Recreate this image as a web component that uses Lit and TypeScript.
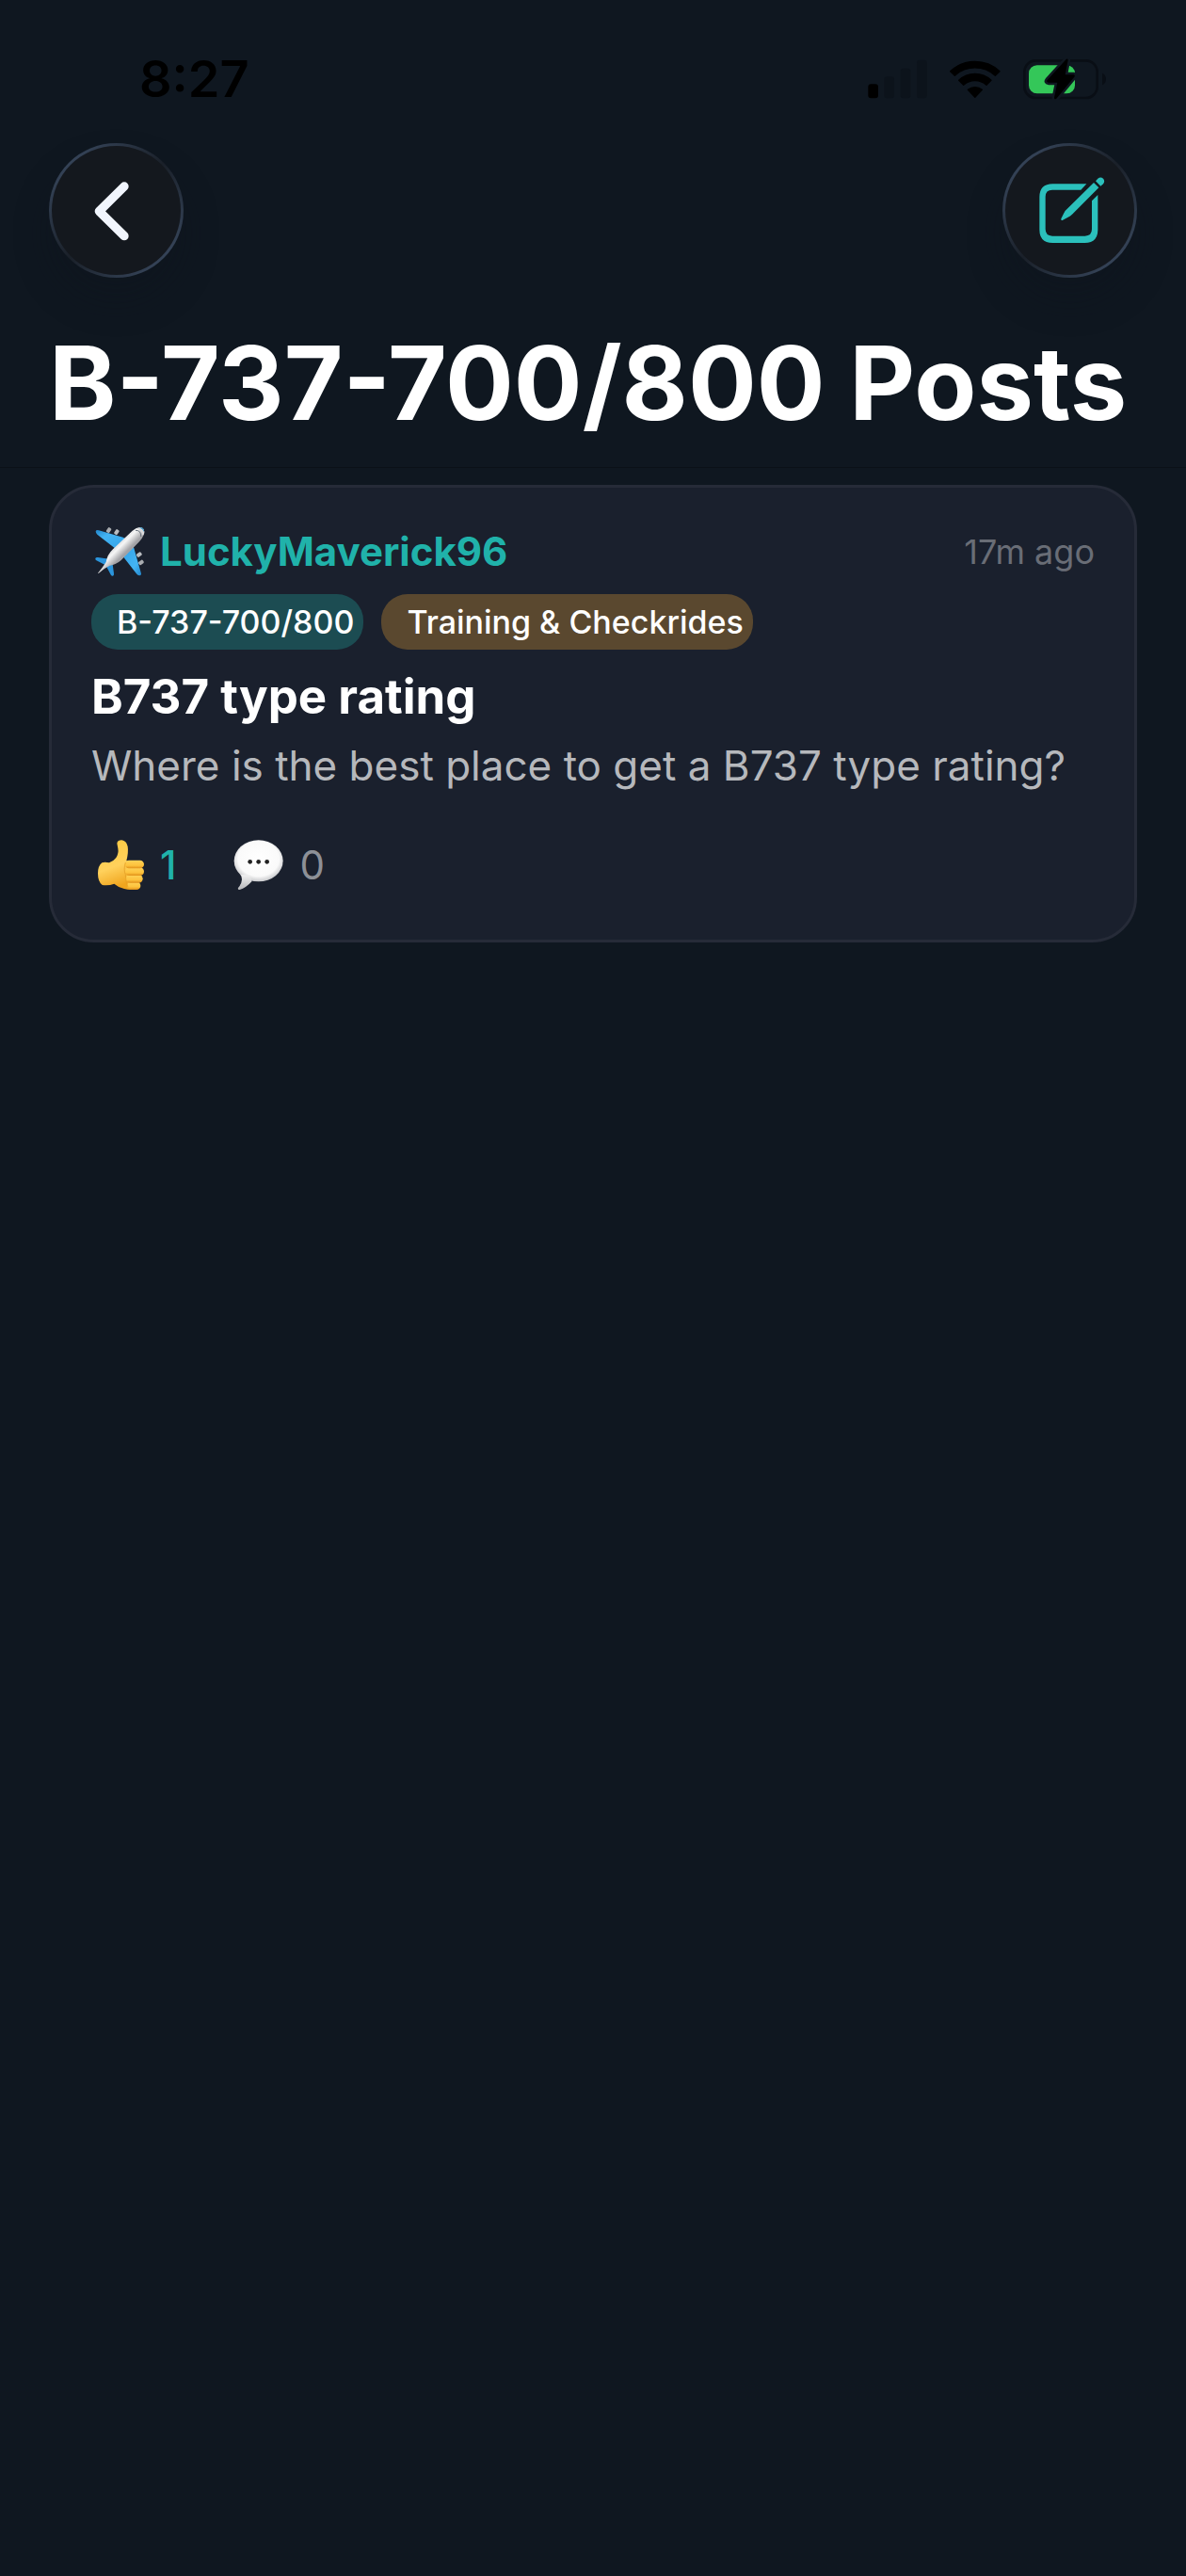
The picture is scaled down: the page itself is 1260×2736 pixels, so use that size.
import { LitElement, html, css, svg } from "lit";
import { customElement, property } from "lit/decorators.js";

interface Post {
  author: string;
  age: string;
  aircraft: string;
  topic: string;
  title: string;
  body: string;
  likes: number;
  comments: number;
}

const signalIcon = html`<svg class="signal" viewBox="185 95 189 132" role="img" aria-label="Signal">
  <rect x="186" y="177" width="32" height="45" rx="9" fill="#000" />
  <g fill="#0c131b">
    <rect x="237" y="153" width="32" height="69" rx="9" />
    <rect x="289" y="127" width="32" height="95" rx="9" />
    <rect x="341" y="100" width="32" height="122" rx="9" />
  </g>
</svg>`;

const wifiIcon = html`<svg class="wifi" viewBox="446 95 162 132" role="img" aria-label="Wi-Fi">
  <g fill="#000" stroke="#000" stroke-width="4" stroke-linejoin="round">
    <path d="M448 136 A115 115 0 0 1 605 136 L591 150 A95 95 0 0 0 462 150 Z" />
    <path d="M475 165 A75 75 0 0 1 578 165 L563 180 A54 54 0 0 0 490 180 Z" />
    <path d="M504 195 A35 35 0 0 1 549 195 L526.500 219 Z" />
  </g>
</svg>`;

const boltPath =
  "M818 98 Q823 94 824 100 L815 147 L842 147 Q848 149 844 154 L787 223 Q780 228 780 220 L790 172 L762 172 Q753 170 758 164 Z";

const batteryIcon = html`<svg class="battery" viewBox="681 95 264 132" role="img" aria-label="Battery charging">
  <rect x="685" y="102" width="232" height="119" rx="36" fill="none" stroke="#090e15" stroke-width="8" />
  <path d="M933 142 Q945 147 945 161 Q945 175 933 180 Z" fill="#090e15" />
  <rect x="699" y="117" width="147" height="90" rx="26" fill="#34c759" />
  <path d=${boltPath} fill="#0f1720" stroke="#0f1720" stroke-width="15" stroke-linejoin="round" />
  <path d=${boltPath} fill="#000" />
</svg>`;

const backIcon = svg`<path d="M394 504 L314 583 L394 662" fill="none" stroke="#f1f5fd"
  stroke-width="28" stroke-linecap="round" stroke-linejoin="round" />`;

const composeIcon = svg`<g fill="#2bc0bc">
  <path d="M885 496 H777 Q735 496 735 538 V642 Q735 684 777 684 H879 Q921 684 921 642 V531 L902 550 V640
    Q902 662 880 662 H776 Q754 662 754 640 V537 Q754 515 776 515 H867 Z" />
  <path d="M908 492 L924 508 L839 593 Q833 599 826 602 L808 612 Q802 613 804 607 L813 589 Q816 582 822 577 Z" />
  <path d="M914 487 L921 479 Q930 472 938 479 Q945 487 938 496 L930 503 Z" />
</g>`;

const planeHalf = svg`
  <rect x="-6" y="-8" width="12" height="17" rx="4" transform="translate(227 188) rotate(35)" fill="#a9acb0" />
  <rect x="-6" y="-8" width="12" height="17" rx="4" transform="translate(252 194) rotate(35)" fill="#b9bcc0" />
  <path d="M185 192 Q187 186 195 189 L272 211 Q282 214 288 222 L260 254 L246 246 L190 202 Q185 198 185 192 Z" fill="url(#wing)" />
  <path d="M184 278 Q186 274 192 275 L228 280 L236 292 L222 303 L186 284 Q183 281 184 278 Z" fill="#2b95dc" />`;

const planeEmoji = html`<svg class="emoji" viewBox="171 176 171 162" role="img" aria-label="Airplane">
  <defs>
    <linearGradient id="wing" x1="0" y1="0" x2="1" y2="1">
      <stop offset="0" stop-color="#2186cc" />
      <stop offset="0.3" stop-color="#44b4f3" />
      <stop offset="1" stop-color="#2e9fe6" />
    </linearGradient>
    <linearGradient id="hull" gradientUnits="userSpaceOnUse" x1="255" y1="225" x2="285" y2="255">
      <stop offset="0" stop-color="#d5d5d7" />
      <stop offset="0.4" stop-color="#f6f6f6" />
      <stop offset="1" stop-color="#a2a2a6" />
    </linearGradient>
  </defs>
  ${planeHalf}
  <g transform="matrix(0 -1 -1 0 518 518)">${planeHalf}</g>
  <path d="M192 325 Q208 306 218 290 Q222 266 240 249 L302 190 Q319 176 333 181 Q344 188 338 204 Q334 214 324 225 L266 284 Q250 298 230 301 Q214 308 194 326 Z" fill="url(#hull)" />
  <path d="M315 183 Q330 186 334 205 L338 202 Q343 188 334 181 Q327 178 315 183 Z" fill="#d9dadc" />
  <path d="M312 189 Q330 188 329 209" fill="none" stroke="#6d7680" stroke-width="3" />
  <path d="M324 180 Q340 178 339 194 L334 186 Z" fill="#2f93c8" />
</svg>`;

const thumbEmoji = html`<svg class="emoji" viewBox="171 335 171 162" role="img" aria-label="Likes">
  <defs>
    <linearGradient id="hand" x1="0" y1="0" x2="0.3" y2="1">
      <stop offset="0" stop-color="#fdc93f" />
      <stop offset="0.6" stop-color="#ffd15c" />
      <stop offset="1" stop-color="#f0a51e" />
    </linearGradient>
    <linearGradient id="finger" x1="0" y1="0" x2="0" y2="1">
      <stop offset="0" stop-color="#ffd257" />
      <stop offset="0.65" stop-color="#fdc23c" />
      <stop offset="1" stop-color="#e08f18" />
    </linearGradient>
  </defs>
  <path d="M205 408 Q214 405 228 408 Q240 405 250 392 Q259 378 256 362 L253 346 Q255 336 268 336 Q283 338 287 356 Q290 374 283 402
    L320 404 L318 490 Q300 497 276 491 Q256 486 244 475 Q226 482 206 479 Q192 468 192 442 Q192 418 205 408 Z" fill="url(#hand)" />
  <g fill="url(#finger)">
    <rect x="285" y="468" width="43" height="26" rx="13" />
    <rect x="281" y="446" width="54" height="26" rx="13" />
    <rect x="279" y="423" width="60" height="26" rx="13" />
    <rect x="278" y="400" width="61" height="26" rx="13" />
  </g>
  <path d="M280 407 Q273 430 280 446 Q280 470 288 486" fill="none" stroke="#e39d22" stroke-width="3" opacity="0.7" />
</svg>`;

const bubbleEmoji = html`<svg class="emoji" viewBox="618 335 171 162" role="img" aria-label="Comments">
  <defs>
    <radialGradient id="bubble" cx="0.5" cy="0.45" r="0.56">
      <stop offset="0" stop-color="#fff" />
      <stop offset="0.75" stop-color="#fafafa" />
      <stop offset="1" stop-color="#c4c5c8" />
    </radialGradient>
    <linearGradient id="tail" x1="0" y1="0" x2="0" y2="1">
      <stop offset="0" stop-color="#f2f2f2" />
      <stop offset="1" stop-color="#b4b5b8" />
    </linearGradient>
  </defs>
  <ellipse cx="707" cy="402" rx="78" ry="66" fill="url(#bubble)" />
  <path d="M650 446 Q661 466 642 488 Q640 495 647 494 Q667 488 686 467 L680 448 Z" fill="url(#tail)" />
  <g fill="#222">
    <circle cx="680" cy="405" r="7" />
    <circle cx="707" cy="405" r="7" />
    <circle cx="734" cy="405" r="7" />
  </g>
</svg>`;

@customElement("status-bar")
export class StatusBar extends LitElement {
  static styles = css`
    :host {
      display: flex;
      justify-content: space-between;
      align-items: center;
      padding: 48px 85px 32px 148px;
      color: #000;
    }
    .time {
      font-size: 54px;
      line-height: 72px;
      font-weight: 600;
    }
    .icons {
      display: flex;
      gap: 24px;
    }
    svg {
      display: block;
      height: 44px;
    }
    .signal {
      width: 63px;
    }
    .wifi {
      width: 54px;
    }
    .battery {
      width: 88px;
    }
  `;

  render() {
    return html`<time class="time">8:27</time>
      <div class="icons">${signalIcon}${wifiIcon}${batteryIcon}</div>`;
  }
}

@customElement("post-card")
export class PostCard extends LitElement {
  @property({ attribute: false }) post!: Post;

  static styles = css`
    :host {
      display: block;
    }
    .card {
      display: flex;
      flex-direction: column;
      padding: 41px 42px 52px;
      border: 3px solid #262b38;
      border-radius: 48px;
      background: #1a202d;
    }
    .row {
      display: flex;
      align-items: center;
    }
    .byline {
      gap: 16px;
      line-height: 54px;
    }
    .emoji {
      display: block;
      flex: none;
      width: 57px;
      height: 54px;
    }
    .author {
      color: #20b2aa;
      font-size: 42px;
      font-weight: 700;
      text-decoration: none;
    }
    .age {
      margin-left: auto;
      color: #696d76;
      font-size: 36px;
    }
    .tags {
      gap: 19px;
      margin-top: 18px;
    }
    .tag {
      padding: 0 10px 0 27px;
      border-radius: 28px;
      color: #fff;
      font-size: 34px;
      line-height: 59px;
      font-weight: 500;
      white-space: nowrap;
    }
    .aircraft {
      background: #1c4c52;
    }
    .topic {
      background: #5a482f;
    }
    .title {
      margin: 19px 0 0;
      color: #fff;
      font-size: 51px;
      line-height: 62px;
      font-weight: 700;
    }
    .body {
      margin: 15px 0 0;
      color: #b6b8bc;
      font-size: 44px;
      line-height: 54px;
    }
    .reactions {
      gap: 58px;
      margin-top: 52px;
    }
    .reaction {
      display: flex;
      align-items: center;
      gap: 16px;
      padding: 0;
      border: 0;
      background: none;
      color: #8d9097;
      font: inherit;
      font-size: 42px;
      line-height: 54px;
    }
    .liked {
      color: #20b2aa;
      font-weight: 500;
    }
  `;

  render() {
    const p = this.post;
    return html`<article class="card">
      <div class="row byline">
        ${planeEmoji}
        <a class="author" href="#author">${p.author}</a>
        <time class="age">${p.age}</time>
      </div>
      <div class="row tags">
        <span class="tag aircraft">${p.aircraft}</span>
        <span class="tag topic">${p.topic}</span>
      </div>
      <h2 class="title">${p.title}</h2>
      <p class="body">${p.body}</p>
      <div class="row reactions">
        <button class="reaction liked" type="button">${thumbEmoji}<span>${p.likes}</span></button>
        <button class="reaction" type="button">${bubbleEmoji}<span>${p.comments}</span></button>
      </div>
    </article>`;
  }
}

@customElement("app-root")
export class AppRoot extends LitElement {
  static styles = css`
    :host {
      display: block;
      box-sizing: border-box;
      min-height: 100vh;
      background: #0f1720;
      font-family: Inter, "Liberation Sans", sans-serif;
    }
    .header {
      border-bottom: 1px solid #0b1118;
      padding-bottom: 24px;
    }
    .toolbar {
      display: flex;
      justify-content: space-between;
      padding: 0 52px;
    }
    .round {
      box-sizing: border-box;
      width: 143px;
      height: 143px;
      padding: 0;
      border: 3px solid transparent;
      border-radius: 50%;
      background:
        linear-gradient(#14181e, #14181e) padding-box,
        linear-gradient(135deg, #344256 15%, #1a2029 50%, #344256 85%) border-box;
      box-shadow: 0 24px 36px rgba(13, 19, 29, 0.35);
    }
    .round svg {
      display: block;
      width: 137px;
      height: 137px;
    }
    .heading {
      margin: 47px 52px 0;
      color: #fff;
      font-size: 108px;
      line-height: 130px;
      font-weight: 700;
      white-space: nowrap;
    }
    .feed {
      padding: 18px 52px;
    }
  `;

  private posts: Post[] = [
    {
      author: "LuckyMaverick96",
      age: "17m ago",
      aircraft: "B-737-700/800",
      topic: "Training & Checkrides",
      title: "B737 type rating",
      body: "Where is the best place to get a B737 type rating?",
      likes: 1,
      comments: 0,
    },
  ];

  render() {
    return html`<header class="header">
        <status-bar></status-bar>
        <nav class="toolbar">
          <button class="round" type="button" aria-label="Back">
            <svg viewBox="163 375 411 411">${backIcon}</svg>
          </button>
          <button class="round" type="button" aria-label="New post">
            <svg viewBox="626 375 411 411">${composeIcon}</svg>
          </button>
        </nav>
        <h1 class="heading">B-737-700/800 Posts</h1>
      </header>
      <main class="feed">${this.posts.map((p) => html`<post-card .post=${p}></post-card>`)}</main>`;
  }
}
